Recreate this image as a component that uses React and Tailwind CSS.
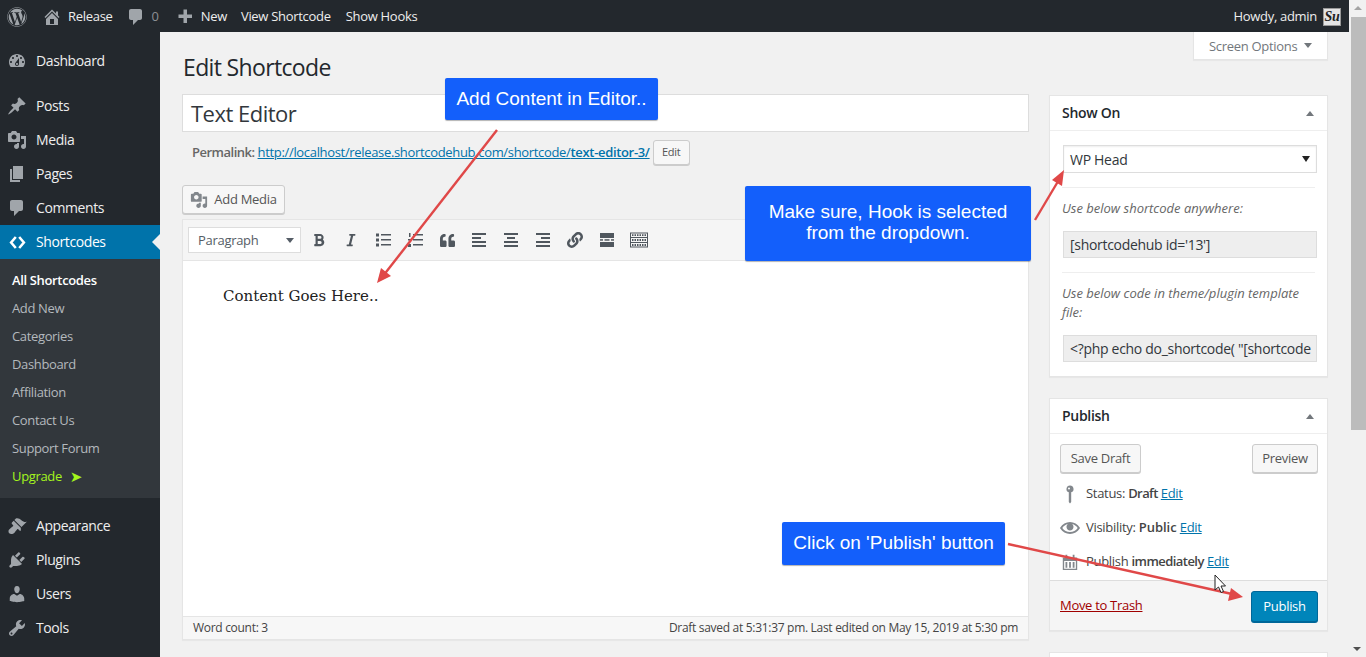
import { FaWordpress, FaBold, FaItalic, FaQuoteLeft, FaLink } from "react-icons/fa"

const paths = {
  dashboard: "M3.76 16h12.48c1.1-1.37 1.76-3.11 1.76-5 0-4.42-3.58-8-8-8s-8 3.58-8 8c0 1.89.66 3.63 1.76 5zM10 4c.55 0 1 .45 1 1s-.45 1-1 1-1-.45-1-1 .45-1 1-1zM6 6c.55 0 1 .45 1 1s-.45 1-1 1-1-.45-1-1 .45-1 1-1zm8 0c.55 0 1 .45 1 1s-.45 1-1 1-1-.45-1-1 .45-1 1-1zm-5.37 5.55L12 7v6c0 1.1-.9 2-2 2s-2-.9-2-2c0-.57.24-1.08.63-1.45zM4 10c.55 0 1 .45 1 1s-.45 1-1 1-1-.45-1-1 .45-1 1-1zm12 0c.55 0 1 .45 1 1s-.45 1-1 1-1-.45-1-1 .45-1 1-1zm-5 3c0-.55-.45-1-1-1s-1 .45-1 1 .45 1 1 1 1-.45 1-1z",
  post: "M10.44 3.02l1.82-1.82 6.36 6.35-1.83 1.82c-1.05-.68-2.48-.57-3.41.36l-.75.75c-.92.93-1.04 2.35-.35 3.41l-1.83 1.82-2.41-2.41-2.8 2.79c-.42.42-3.38 2.71-3.8 2.29s1.86-3.39 2.28-3.81l2.79-2.79L4.1 9.36l1.83-1.82c1.05.69 2.48.57 3.4-.36l.75-.75c.93-.92 1.05-2.35.36-3.41z",
  media: "M13 11V4c0-.55-.45-1-1-1h-1.67L9 1H5L3.67 3H2c-.55 0-1 .45-1 1v7c0 .55.45 1 1 1h10c.55 0 1-.45 1-1zM7 4.5c1.38 0 2.5 1.12 2.5 2.5S8.38 9.5 7 9.5 4.5 8.38 4.5 7 5.62 4.5 7 4.5zM14 6h5v10.5c0 1.38-1.12 2.5-2.5 2.5S14 17.88 14 16.5s1.12-2.5 2.5-2.5c.17 0 .34.02.5.05V9h-3V6zm-4 8.05V13h2v3.5c0 1.38-1.12 2.5-2.5 2.5S7 17.88 7 16.5 8.12 14 9.5 14c.17 0 .34.02.5.05z",
  page: "M6 15V2h10v13H6zm-1 1h8v2H3V5h2v11z",
  comment: "M5 2h9c1.1 0 2 .9 2 2v7c0 1.1-.9 2-2 2h-2l-5 5v-5H5c-1.1 0-2-.9-2-2V4c0-1.1.9-2 2-2z",
  appearance: "M14.48 11.06L7.41 3.99l1.5-1.5c.5-.56 2.3-.47 3.51.32 1.21.8 1.43 1.28 2.91 2.1 1.18.64 2.45 1.26 4.45.85zm-.71.71L6.7 4.7 4.93 6.47c-.39.39-.39 1.02 0 1.41l1.06 1.06c.39.39.39 1.03 0 1.42-.6.6-1.43 1.11-2.21 1.69-.35.26-.7.53-1.01.84C1.43 13.23.96 15.91 2.22 17.17c1.27 1.27 3.95.8 5.29-.54.31-.31.58-.66.84-1.01.58-.78 1.09-1.61 1.69-2.21.39-.39 1.03-.39 1.42 0l1.06 1.06c.39.39 1.02.39 1.41 0z",
  plugin: "M13.11 4.36L9.87 7.6 8 5.73l3.24-3.24c.35-.34 1.05-.2 1.56.32.52.51.66 1.21.31 1.55zm-8 1.77l.91-1.12 9.01 9.01-1.19.84c-.71.71-2.63 1.16-3.82 1.16H6.14L4.9 17.26c-.59.59-1.54.59-2.12 0-.59-.58-.59-1.53 0-2.12l1.24-1.24v-3.88c0-1.13.4-3.19 1.09-3.89zm7.26 3.97l3.24-3.24c.34-.35 1.04-.21 1.55.31.52.51.66 1.21.31 1.55l-3.24 3.25z",
  user: "M10 9.25c-2.27 0-2.73-3.44-2.73-3.44C7 4.02 7.82 2 9.97 2c2.16 0 2.98 2.02 2.71 3.81 0 0-.41 3.44-2.68 3.44zm0 2.57L12.72 10c2.39 0 4.52 2.33 4.52 4.53v2.49s-3.65 1.13-7.24 1.13c-3.65 0-7.24-1.13-7.24-1.13v-2.49c0-2.25 1.94-4.48 4.47-4.48z",
  tools: "M16.68 9.77c-1.34 1.34-3.3 1.67-4.95.99l-5.41 6.52c-.99.99-2.59.99-3.58 0s-.99-2.59 0-3.57l6.52-5.42c-.68-1.65-.35-3.61.99-4.95 1.28-1.28 3.12-1.62 4.72-1.06l-2.89 2.89 2.82 2.82 2.86-2.87c.53 1.58.18 3.39-1.08 4.65zM3.81 16.21c.4.39 1.04.39 1.43 0 .4-.4.4-1.04 0-1.43-.39-.4-1.03-.4-1.43 0-.39.39-.39 1.03 0 1.43z",
  home: "M16 8.5l1.53 1.53-1.06 1.06L10 4.62l-6.47 6.47-1.06-1.06L10 2.5l4 4v-2h2v4zm-6-2.46l6 5.99V18H4v-5.97zM12 17v-5H8v5h4z",
  plus: "M17 7.5v3.5h-5v5H8.5v-5h-5V7.5h5v-5H12v5z",
  eye: "M19.7 9.4C17.7 6 14 3.9 10 3.9S2.3 6 .3 9.4L0 10l.3.6c2 3.4 5.7 5.5 9.7 5.5s7.7-2.1 9.7-5.5l.3-.6-.3-.6zM10 14.1c-3.1 0-6-1.6-7.7-4.1C3.6 8 5.7 6.6 8 6.1c-.9.6-1.5 1.7-1.5 2.9 0 1.9 1.6 3.5 3.5 3.5s3.5-1.6 3.5-3.5c0-1.2-.6-2.3-1.5-2.9 2.3.5 4.4 1.9 5.7 3.9-1.7 2.5-4.6 4.1-7.7 4.1z",
  key: "M10 1.5a3.5 3.5 0 0 1 1.2 6.8V18l-1.2 1.5L8.8 18V8.3A3.5 3.5 0 0 1 10 1.5zM9 3.5a1 1 0 1 0 0 2 1 1 0 0 0 0-2z",
  calendar: "M2 5h3V2h2v3h6V2h2v3h3v14H2zm1.5 4v8.5h13V9zM5 10h2v6.5H5zm4 0h2v6.5H9zm4 0h2v6.5h-2z",
}

const Dash = ({ name, size = 20, className = "" }) => (
  <svg viewBox="0 0 20 20" width={size} height={size} fill="currentColor" fillRule="evenodd" className={className}>
    <path d={paths[name]} />
  </svg>
)

const Lines = ({ rows }) => (
  <svg viewBox="0 0 20 20" width="20" height="20" fill="currentColor">
    {rows.map((r, i) => (
      <rect key={i} x={r[0]} y={r[1]} width={r[2]} height={r[3] || 2} />
    ))}
  </svg>
)

const toolbar = [
  <FaBold key="b" size={14} />,
  <FaItalic key="i" size={14} />,
  <Lines key="ul" rows={[[3, 3.5, 3, 3], [8, 4, 10, 1.5], [3, 8.5, 3, 3], [8, 9, 10, 1.5], [3, 13.5, 3, 3], [8, 14, 10, 1.5]]} />,
  <Lines key="ol" rows={[[4, 3, 1.5, 4], [8, 4, 10, 1.5], [3, 9, 3, 1.5], [8, 9, 10, 1.5], [3, 14, 3, 3], [8, 14, 10, 1.5]]} />,
  <FaQuoteLeft key="q" size={15} />,
  <Lines key="l" rows={[[3, 3, 14], [3, 7, 9], [3, 11, 14], [3, 15, 14]]} />,
  <Lines key="c" rows={[[3, 3, 14], [6, 7, 8], [3, 11, 14], [3, 15, 14]]} />,
  <Lines key="r" rows={[[3, 3, 14], [8, 7, 9], [3, 11, 14], [3, 15, 14]]} />,
  <FaLink key="link" size={16} />,
  <Lines key="more" rows={[[3, 3, 14, 5], [3, 9.2, 3, 1.5], [7.5, 9.2, 5, 1.5], [14, 9.2, 3, 1.5], [3, 12, 14, 5]]} />,
  <svg key="kb" viewBox="0 0 20 20" width="20" height="20" fill="none" stroke="currentColor" strokeWidth="1">
    <rect x="1.5" y="3" width="17" height="14" />
    <path d="M1.5 7.5h17M1.5 12.5h17" />
    <path d="M3 5.2h14M3 10h14M3 15h14" strokeWidth="1.8" strokeDasharray="1.5 1" />
  </svg>,
]

const SideItem = ({ icon, label }) => (
  <div className="flex h-[34px] items-center pl-[7px] text-[14px] tracking-[-0.4px] text-[#eeeeee]">
    <Dash name={icon} className="mr-[9px] text-[#a0a5aa]" />
    <span className="mb-[2px]">{label}</span>
  </div>
)

const SubItem = ({ children, className = "text-[#b4b9be]" }) => (
  <div className={`flex h-[28px] items-center pl-[12px] text-[13px] tracking-[-0.35px] ${className}`}>{children}</div>
)

const Btn = ({ children, className = "" }) => (
  <div className={`flex h-[29px] items-center justify-center rounded-[3px] border border-[#cccccc] bg-[#f7f7f7] text-[13px] text-[#555555] shadow-[0_1px_0_#cccccc] ${className}`}>
    {children}
  </div>
)

const Box = ({ title, children, className = "" }) => (
  <div className={`border border-[#e5e5e5] bg-white shadow-[0_1px_1px_rgba(0,0,0,0.04)] ${className}`}>
    <div className="flex h-[35px] items-center justify-between border-b border-[#eeeeee] pl-[12px] pr-[13px] text-[14px] font-semibold text-[#23282d]">
      <span className="mb-[2px]">{title}</span>
      <div className="h-0 w-0 border-x-[4px] border-b-[5px] border-x-transparent border-b-[#72777c]" />
    </div>
    {children}
  </div>
)

const CodeField = ({ children }) => (
  <div className="ml-[13px] mr-[10px] flex h-[27px] items-center whitespace-nowrap border border-[#dddddd] bg-[#eeeeee] pl-[6px] text-[14px] text-[#32373c]">
    {children}
  </div>
)

const Callout = ({ className, children }) => (
  <div className={`absolute flex items-center justify-center rounded-[2px] bg-[#135ffb] text-center font-['Liberation_Sans',sans-serif] text-[19px] leading-[21px] tracking-normal text-white shadow-[0_1px_1px_rgba(0,0,0,0.3)] ${className}`}>
    {children}
  </div>
)

export default function App() {
  return (
    <div className="relative flex h-[657px] w-[1366px] overflow-hidden bg-[#f1f1f1] font-['Open_Sans',sans-serif] text-[13px] tracking-[-0.3px] text-[#444444]">
      <div className="flex w-[1349px] flex-col">
        {/* admin bar */}
        <div className="flex h-[32px] shrink-0 items-center bg-[#23282d] pr-[8px] pt-[1px] text-[13px] text-[#eeeeee]">
          <FaWordpress size={20} className="ml-[7px] text-[#a0a5aa]" />
          <Dash name="home" className="ml-[15px] text-[#a0a5aa]" />
          <span className="ml-[6px]">Release</span>
          <Dash name="comment" className="ml-[13px] text-[#a0a5aa]" />
          <span className="ml-[6px] text-[#8c8f94]">0</span>
          <Dash name="plus" className="ml-[16px] text-[#a0a5aa]" />
          <span className="ml-[6px]">New</span>
          <span className="ml-[14px]">View Shortcode</span>
          <span className="ml-[15px]">Show Hooks</span>
          <span className="ml-auto">Howdy, admin</span>
          <div className="ml-[6px] flex h-[18px] w-[18px] items-center justify-center overflow-hidden border border-[#999999] bg-[#e4e4e4] font-['Liberation_Serif',serif] text-[14px] font-bold italic text-[#222222]">
            Su
          </div>
        </div>

        <div className="flex min-h-0 flex-1">
          {/* sidebar */}
          <div className="w-[160px] shrink-0 bg-[#23282d] pt-[12px]">
            <SideItem icon="dashboard" label="Dashboard" />
            <div className="h-[11px]" />
            <SideItem icon="post" label="Posts" />
            <SideItem icon="media" label="Media" />
            <SideItem icon="page" label="Pages" />
            <SideItem icon="comment" label="Comments" />
            <div className="relative flex h-[34px] items-center bg-[#0073aa] pl-[9px] text-[14px] tracking-[-0.4px] text-white">
              <svg viewBox="0 0 20 20" width="17" height="17" fill="none" stroke="currentColor" strokeWidth="3" className="mr-[10px]">
                <path d="M8 3.5 2.5 10 8 16.5M12 3.5 17.5 10 12 16.5" />
              </svg>
              <span className="mb-[2px]">Shortcodes</span>
              <div className="absolute right-0 top-[9px] h-0 w-0 border-y-[8px] border-r-[8px] border-y-transparent border-r-[#f1f1f1]" />
            </div>
            <div className="bg-[#32373c] pb-[7px] pt-[8px]">
              <SubItem className="font-semibold text-white">All Shortcodes</SubItem>
              <SubItem>Add New</SubItem>
              <SubItem>Categories</SubItem>
              <SubItem>Dashboard</SubItem>
              <SubItem>Affiliation</SubItem>
              <SubItem>Contact Us</SubItem>
              <SubItem>Support Forum</SubItem>
              <SubItem className="text-[#a4f51c]">
                Upgrade<span className="ml-[8px] font-['DejaVu_Sans',sans-serif] text-[15px]">➤</span>
              </SubItem>
            </div>
            <div className="h-[11px]" />
            <SideItem icon="appearance" label="Appearance" />
            <SideItem icon="plugin" label="Plugins" />
            <SideItem icon="user" label="Users" />
            <SideItem icon="tools" label="Tools" />
          </div>

          {/* main */}
          <div className="flex min-w-0 flex-1 gap-[20px] pl-[22px]">
            <div className="w-[847px] shrink-0">
              <h1 className="pl-[1px] pt-[20px] text-[23px] leading-[30px] tracking-[-0.65px] text-[#23282d]">Edit Shortcode</h1>
              <div className="mt-[12px] flex h-[38px] items-center border border-[#dddddd] bg-white pl-[8px] text-[22px] tracking-[-0.5px] text-[#32373c]">
                Text Editor
              </div>
              <div className="mt-[8px] flex h-[25px] items-center pl-[10px] text-[13px]">
                <span className="font-semibold tracking-[-0.5px] text-[#666666]">Permalink:</span>
                <span className="ml-[3px] tracking-[-0.33px] text-[#0073aa] underline">
                  http://localhost/release.shortcodehub.com/shortcode/<b className="font-semibold">text-editor-3/</b>
                </span>
                <Btn className="ml-[3px] !h-[25px] w-[37px] !text-[11px]">Edit</Btn>
              </div>
              <Btn className="mt-[20px] w-[103px]">
                <Dash name="media" size={18} className="mr-[6px] text-[#82878c]" />
                Add Media
              </Btn>
              <div className="mt-[5px] flex h-[421px] flex-col border border-[#e5e5e5] bg-white shadow-[0_1px_1px_rgba(0,0,0,0.04)]">
                <div className="flex h-[41px] shrink-0 items-center border-b border-[#e5e5e5] bg-[#f5f5f5] pl-[5px] text-[#50575e]">
                  <div className="flex h-[26px] w-[113px] items-center justify-between border border-[#dddddd] bg-white pl-[9px] pr-[6px] text-[13px] text-[#555d66]">
                    <span className="mt-[2px]">Paragraph</span>
                    <div className="h-0 w-0 border-x-[4px] border-t-[5px] border-x-transparent border-t-[#555d66]" />
                  </div>
                  <div className="ml-[2px] flex">
                    {toolbar.map((icon) => (
                      <div key={icon.key} className="flex h-[28px] w-[32px] items-center justify-center">
                        {icon}
                      </div>
                    ))}
                  </div>
                </div>
                <div className="flex-1 pl-[40px] pt-[24px] font-['DejaVu_Serif',serif] text-[15px] leading-[22px] tracking-normal text-[#222222]">
                  Content Goes Here..
                </div>
                <div className="flex h-[23px] shrink-0 items-center justify-between border-t border-[#e5e5e5] bg-[#f7f7f7] px-[10px] text-[12px] text-[#444444]">
                  <span>Word count: 3</span>
                  <span>Draft saved at 5:31:37 pm. Last edited on May 15, 2019 at 5:30 pm</span>
                </div>
              </div>
            </div>

            <div className="w-[279px] shrink-0">
              <div className="ml-auto flex h-[28px] w-[135px] items-center border border-t-0 border-[#e5e5e5] bg-white pl-[15px] text-[13px] text-[#72777c] shadow-[0_1px_1px_rgba(0,0,0,0.04)]">
                <span className="mt-[2px]">Screen Options</span>
                <div className="ml-[7px] h-0 w-0 border-x-[4px] border-t-[5px] border-x-transparent border-t-[#72777c]" />
              </div>

              <Box title="Show On" className="mt-[35px] h-[282px]">
                <div className="ml-[13px] mr-[10px] mt-[14px] flex h-[28px] items-center justify-between border border-[#dddddd] pl-[6px] pr-[6px] text-[14px] text-[#32373c] shadow-[inset_0_1px_2px_rgba(0,0,0,0.07)]">
                  WP Head
                  <div className="h-0 w-0 border-x-[4px] border-t-[6px] border-x-transparent border-t-[#222222]" />
                </div>
                <div className="mx-[12px] mt-[14px] border-t border-[#eeeeee]" />
                <p className="ml-[12px] mt-[11px] text-[13px] italic leading-[19px] tracking-normal text-[#666666]">Use below shortcode anywhere:</p>
                <div className="mt-[13px]">
                  <CodeField>[shortcodehub id='13']</CodeField>
                </div>
                <div className="mx-[12px] mt-[14px] border-t border-[#eeeeee]" />
                <p className="mx-[12px] mt-[11px] text-[13px] italic leading-[19px] tracking-normal text-[#666666]">Use below code in theme/plugin template file:</p>
                <div className="mt-[13px]">
                  <CodeField>&lt;?php echo do_shortcode( "[shortcode</CodeField>
                </div>
              </Box>

              <Box title="Publish" className="mt-[21px] h-[233px]">
                <div className="flex justify-between pl-[10px] pr-[9px] pt-[10px]">
                  <Btn className="w-[81px]">Save Draft</Btn>
                  <Btn className="w-[66px]">Preview</Btn>
                </div>
                <div className="mt-[4px] flex h-[34px] items-center pl-[10px] text-[13px] text-[#444444]">
                  <Dash name="key" className="mr-[6px] w-[20px] text-[#82878c]" />
                  Status:&nbsp;<b className="font-semibold tracking-[-0.6px]">Draft</b>&nbsp;<span className="text-[#0073aa] underline">Edit</span>
                </div>
                <div className="flex h-[34px] items-center pl-[10px] text-[13px] text-[#444444]">
                  <Dash name="eye" className="mr-[6px] text-[#82878c]" />
                  Visibility:&nbsp;<b className="font-semibold tracking-normal">Public</b>&nbsp;<span className="text-[#0073aa] underline">Edit</span>
                </div>
                <div className="flex h-[34px] items-center pl-[10px] text-[13px] text-[#444444]">
                  <Dash name="calendar" size={18} className="ml-[1px] mr-[7px] text-[#82878c]" />
                  Publish&nbsp;<b className="font-semibold tracking-[-0.55px]">immediately</b>&nbsp;<span className="text-[#0073aa] underline">Edit</span>
                </div>
                <div className="mt-[1px] flex h-[50px] items-center justify-between border-t border-[#dddddd] bg-[#f5f5f5] pl-[10px] pr-[9px]">
                  <span className="text-[13px] text-[#a00000] underline">Move to Trash</span>
                  <div className="mt-[2px] flex h-[31px] w-[67px] items-center justify-center rounded-[3px] border border-[#006799] bg-[#0085ba] text-[13px] text-white shadow-[0_1px_0_#006799]">
                    Publish
                  </div>
                </div>
              </Box>

              <div className="mt-[21px] h-[40px] border border-[#e5e5e5] bg-white" />
            </div>
          </div>
        </div>
      </div>

      {/* scrollbar */}
      <div className="relative w-[17px] shrink-0 bg-[#f1f1f1]">
        <div className="mx-auto mt-[6px] h-0 w-0 border-x-[4px] border-b-[4px] border-x-transparent border-b-[#a3a3a3]" />
        <div className="ml-[2px] mt-[7px] h-[413px] w-[15px] bg-[#bcbcbc]" />
        <div className="absolute bottom-[6px] left-[4px] h-0 w-0 border-x-[4px] border-t-[4px] border-x-transparent border-t-[#505050]" />
      </div>

      {/* annotations drawn over the page */}
      <Callout className="left-[445px] top-[78px] h-[42px] w-[213px] pb-[2px]">Add Content in Editor..</Callout>
      <Callout className="left-[745px] top-[186px] h-[75px] w-[286px] pb-[4px]">
        Make sure, Hook is selected
        <br />
        from the dropdown.
      </Callout>
      <Callout className="left-[782px] top-[522px] h-[43px] w-[223px] pb-[2px]">Click on 'Publish' button</Callout>

      <svg width="1366" height="657" viewBox="0 0 1366 657" className="pointer-events-none absolute left-0 top-0">
        <g stroke="#e04848" strokeWidth="2.4" fill="#e04848">
          <line x1="497" y1="130" x2="383" y2="276" />
          <line x1="1035" y1="220" x2="1060" y2="178" />
          <line x1="1008" y1="544" x2="1232" y2="594" />
        </g>
        <g fill="#e04848">
          <polygon points="377,283 381,268 391,276" />
          <polygon points="1064,170 1062,186 1052,180" />
          <polygon points="1243,597 1228,601 1231,588" />
        </g>
        <path d="M1215 575v15l3.5-3 2.5 5.5 2.5-1-2.5-5.5h4.5z" fill="#ffffff" stroke="#222222" strokeWidth="1" />
      </svg>
    </div>
  )
}
